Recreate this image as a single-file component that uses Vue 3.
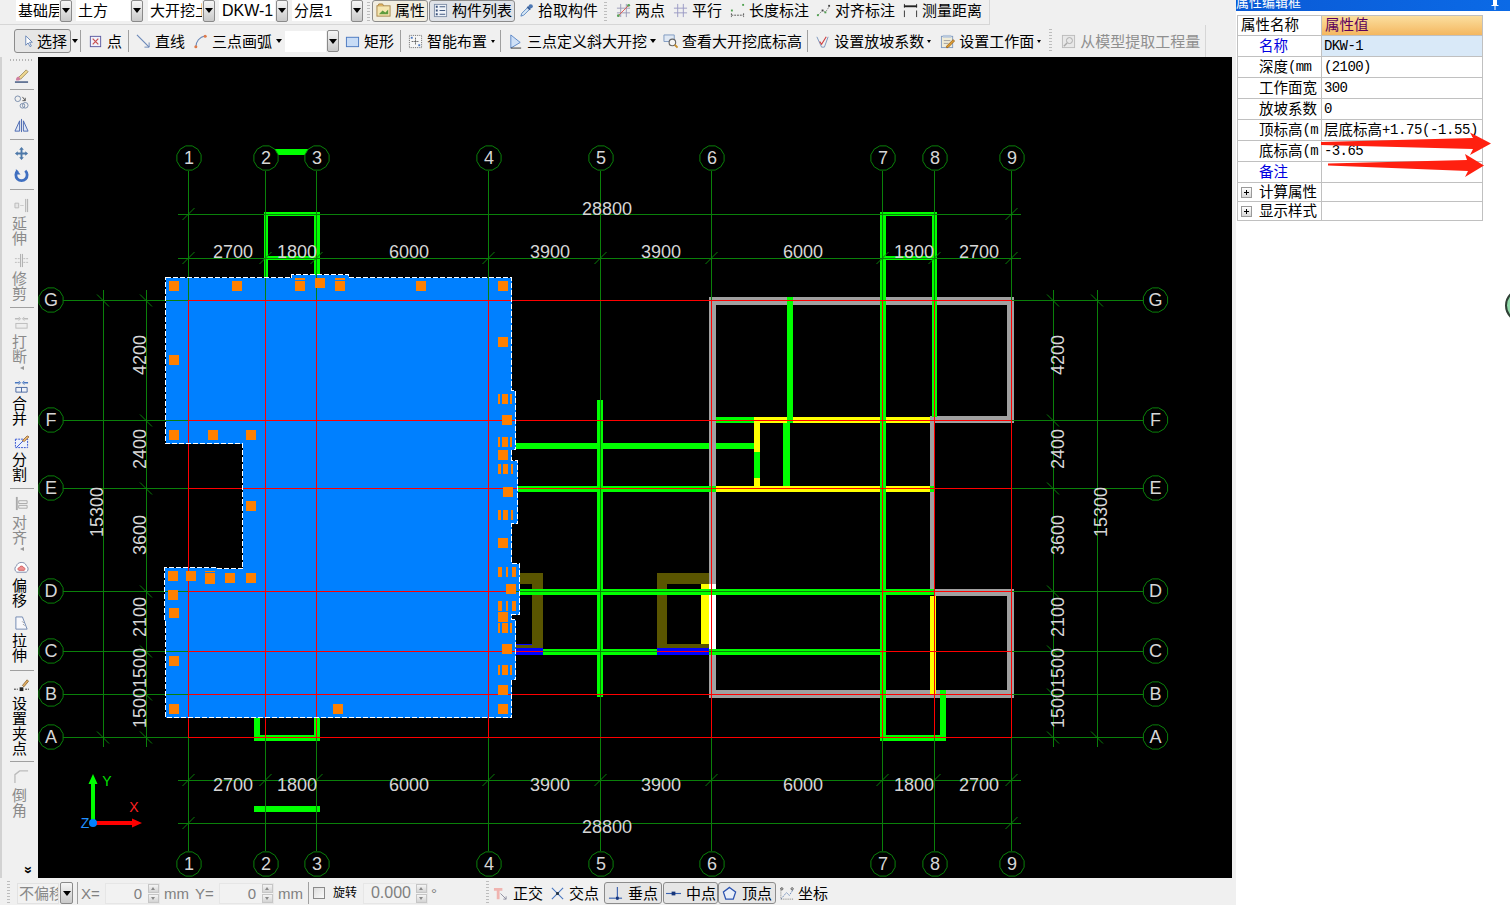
<script setup>
const ml = n => ({ marginLeft: n + 'px' })
const mt = n => ({ marginTop: n + 'px' })

const ic = {
  attr: '<rect x="1" y="3" width="14" height="11" fill="#f6e6b0" stroke="#a8864a"/><path d="M3 12l4-4 3 2 3-3v5z" fill="#5f9c3f"/><path d="M2 3l1-2h4l1 2" fill="#e8b860" stroke="#a8864a"/>',
  list: '<rect x="1.5" y="1.5" width="13" height="13" fill="#eef2f8" stroke="#8090a8"/><path d="M3 3h2v2H3zM3 7h2v2H3zM3 11h2v2H3z" fill="#39507a"/><path d="M7 4h6M7 8h6M7 12h6" stroke="#39507a"/>',
  pick: '<path d="M2 14l1-3 6-6 2 2-6 6z" fill="#d8e8f6" stroke="#5a86c0"/><path d="M9 4l3 3" stroke="#3a5f98" stroke-width="2"/><circle cx="12.5" cy="3.5" r="2.3" fill="#4d78b4"/>',
  two: '<path d="M5 1v14M11 1v14M1 5.5h14M1 10.5h14" stroke="#9a9ab8"/><path d="M2 14L14 2" stroke="#e05a50"/><circle cx="2.5" cy="13.5" r="1.5" fill="#5aa05a"/><circle cx="13.5" cy="2.5" r="1.5" fill="#5aa05a"/>',
  par: '<path d="M5 1v14M11 1v14M1 5.5h14M1 10.5h14" stroke="#9a9ac4"/>',
  len: '<path d="M1.5 11v4M14.5 11v4M1.5 13h13" stroke="#555" stroke-dasharray="2 1"/><rect x="1" y="7" width="2" height="2" fill="#4ea04e"/><rect x="13" y="1" width="2" height="2" fill="#4ea04e"/>',
  ali: '<path d="M2 13L7 8l3 2 4-6" fill="none" stroke="#888" stroke-dasharray="2 1"/><rect x="1" y="12" width="2" height="2" fill="#4ea04e"/><rect x="6" y="7" width="2" height="2" fill="#444"/><rect x="9" y="9" width="2" height="2" fill="#4ea04e"/><rect x="13" y="2" width="2" height="2" fill="#444"/>',
  mea: '<path d="M1.500 1v4M14.500 1v4M1.500 8v7M14.500 8v7" stroke="#333"/><path d="M1 3.500h14" stroke="#222" stroke-width="2"/>',
  sel: '<path d="M4 2v10l2.500-2.500 2 4 1.500-.7-2-4H11z" fill="#fff" stroke="#6a88b8"/>',
  pt: '<rect x="2.5" y="2.5" width="11" height="11" fill="#f2f2fa" stroke="#5a5aa0"/><path d="M5 5l6 6M11 5l-6 6" stroke="#c85050" stroke-width="1.3"/>',
  line: '<path d="M1 1l13 13" stroke="#6a88b8" stroke-width="1.2"/><path d="M14 14v-5M14 14H9" stroke="#6a88b8"/>',
  arc: '<path d="M3 14C3 8 7 3 13 2" fill="none" stroke="#6a88b8" stroke-width="1.2"/><circle cx="3" cy="13.5" r="1.6" fill="#e07a4a"/><circle cx="13" cy="2.5" r="1.6" fill="#e07a4a"/>',
  rect: '<rect x="1.5" y="3.5" width="13" height="10" fill="#c8dcf6" stroke="#4a78c0"/>',
  smart: '<rect x="1.5" y="1.5" width="13" height="13" fill="#f6f6f6" stroke="#666" stroke-dasharray="1 1"/><path d="M8 4v8M4 8h8" stroke="#222" stroke-dasharray="1 1"/><rect x="3" y="3" width="2" height="2" fill="#4a78c0"/><rect x="11" y="11" width="2" height="2" fill="#4a78c0"/>',
  slope: '<path d="M3 1v14l10-6z" fill="#cfe0f6" stroke="#5a86c8"/><path d="M3 15h11" stroke="#333"/>',
  view: '<path d="M1 1h11v7H1z" fill="#dfe8f4" stroke="#7f9ac0"/><circle cx="10" cy="9" r="3.5" fill="#f4f4f4" stroke="#666" stroke-width="1.2"/><path d="M12.5 11.5l3 3" stroke="#c89030" stroke-width="2"/>',
  coef: '<path d="M2 3l5 11h3l4-11" fill="none" stroke="#7a94bc"/><path d="M5 8l2 3 5-8" fill="none" stroke="#d04040" stroke-width="1.2"/>',
  work: '<rect x="1.5" y="2.5" width="12" height="12" fill="#f0ecd8" stroke="#7f9ac0"/><path d="M3 1h9v3H3z" fill="#b8c8dc"/><path d="M4 7h7M4 10h5" stroke="#a0a0a0"/><path d="M7 13l7-7 1.5 1.5-7 7H7z" fill="#e0a030" stroke="#a06820"/>',
  ext: '<rect x="1.5" y="1.5" width="13" height="13" fill="#e8e8e8" stroke="#bbb"/><circle cx="9" cy="7" r="3.2" fill="none" stroke="#aaa"/><path d="M6.5 9.5L3 13" stroke="#aaa" stroke-width="1.5"/>',
  brush: '<path d="M5 10l8-8 2 2-8 8z" fill="#f0d890" stroke="#a09060"/><path d="M2 13c0-3 2-4 3-4l2 3c-1 1-3 2-5 1z" fill="#d080a0"/><path d="M1 15h14" stroke="#39507a" stroke-width="1.5"/>',
  circles: '<circle cx="4" cy="4" r="3" fill="none" stroke="#7a8eac"/><circle cx="9" cy="11.5" r="2.5" fill="none" stroke="#7a8eac"/><circle cx="12" cy="11" r="3" fill="none" stroke="#7a8eac"/><path d="M9 2l3 4M12 6V3M12 6H9" fill="none" stroke="#555"/>',
  mirror: '<path d="M8 1v14" stroke="#4a68b0"/><path d="M6 3v11H1zM10 3v11h5z" fill="#dfe7f6" stroke="#4a68b0"/>',
  move: '<path d="M8 1l2.5 3h-5zM8 15l2.5-3h-5zM1 8l3-2.5v5zM15 8l-3-2.5v5zM7 4h2v8H7zM4 7h8v2H4z" fill="#4d78a8"/>',
  rotate: '<path d="M4 3a6 6 0 1 0 8 0" fill="none" stroke="#3f6fc0" stroke-width="3"/><path d="M2 1v6h5z" fill="#3f6fc0"/>',
  ext2: '<path d="M12.5 1v14M14.5 1v14" stroke="#aaa"/><path d="M1 8h4M7 8h1M9 8h1" stroke="#aaa"/><path d="M1 5.5h4v5H1z" fill="#e6e6e6" stroke="#bbb"/>',
  trim: '<path d="M7 1v14M9 1v14" stroke="#aaa"/><path d="M1 6h5M1 10h5M10 6h5M10 10h5" stroke="#bbb" stroke-dasharray="2 1"/>',
  brk: '<path d="M1 4h5M10 4h5" stroke="#bbb" stroke-width="1.5"/><path d="M5 2l2 2-2 2M11 2L9 4l2 2" fill="none" stroke="#bbb"/><rect x="2" y="9" width="12" height="5" fill="#eee" stroke="#bbb"/>',
  merge: '<path d="M1 4h5M10 4h5" stroke="#4a78c0" stroke-width="1.5"/><path d="M5 2l2 2-2 2M11 2L9 4l2 2" fill="none" stroke="#4a78c0"/><path d="M2 9h12v5H2zM8 9v5" fill="#eef2f8" stroke="#4a68a0"/>',
  split: '<rect x="1.5" y="5.5" width="13" height="9" fill="#eef2fb" stroke="#3050d0" stroke-dasharray="2 1"/><path d="M3 14L14 3" stroke="#3050d0"/><path d="M9 7l5-5 2 1-5 5z" fill="#e8b870" stroke="#a07040"/>',
  align: '<path d="M3 1v14" stroke="#aaa" stroke-width="2"/><path d="M5 5h9v3H5zM5 10h9v3H5z" fill="#eee" stroke="#aaa"/>',
  offset: '<path d="M3 13a4 4 0 0 1 0-7c0-4 9-5 10 0a4 4 0 0 1 0 7z" fill="#fff" stroke="#7a88a8"/><path d="M5 11c-2-2 0-3 1-3 0-2 4-2 4 0 2 0 2 2 1 3z" fill="#ee9090" stroke="#d06060"/>',
  stretch: '<path d="M2 1h7l5 13H2z" fill="#f8f8fb" stroke="#7088b0"/><path d="M9 6l1 1M10 9l1 1" stroke="#555"/>',
  grip: '<path d="M9 9l5-6 1.5 1.5-5 6z" fill="#e8b060" stroke="#907040"/><path d="M0 13h4M12 13h4" stroke="#222" stroke-dasharray="2 1"/><rect x="6" y="11" width="4" height="4" fill="#222"/>',
  chamfer: '<path d="M1 15V6l5-4h9" fill="none" stroke="#bbb" stroke-width="1.4"/>',
  ortho: '<path d="M1 2h9v3H7v9H4V5H1z" fill="#f0b4b0"/><path d="M8 8l6 6M11 14l3 0 0-3" stroke="#9090a0" fill="none"/>',
  cross: '<path d="M2 2l12 12M14 2L2 14" stroke="#4a78c0" stroke-width="1.2"/><rect x="6.5" y="6.5" width="3" height="3" fill="#234"/>',
  perp: '<path d="M1 13h14" stroke="#3a62b0" stroke-width="1.2"/><path d="M10 1v14" stroke="#3a62b0" stroke-width="1.2"/><rect x="8.5" y="11.5" width="3" height="3" fill="#17357a"/>',
  mid: '<path d="M0 8h16" stroke="#3a62b0" stroke-width="1.2"/><rect x="6" y="6" width="4" height="4" fill="#17357a"/>',
  vert: '<path d="M8 1.5l6.5 5-2.5 7.5H4L1.500 6.500z" fill="#e8eef8" stroke="#2a52b0" stroke-width="1.4"/>',
  coord: '<path d="M2 14L8 7l3 3 4-6" fill="none" stroke="#6a88b8" stroke-dasharray="2 1"/><path d="M2 2v12h13" fill="none" stroke="#777" stroke-dasharray="1 1"/><circle cx="3" cy="3" r="1.2" fill="none" stroke="#555"/><circle cx="14" cy="3" r="1.2" fill="none" stroke="#555"/>'
}

const row1Tools = [
  { ic: 'two', t: '两点', m: 9 },
  { ic: 'par', t: '平行', m: 8 },
  { ic: 'len', t: '长度标注', m: 8 },
  { ic: 'ali', t: '对齐标注', m: 7 },
  { ic: 'mea', t: '测量距离', m: 8 }
]

const row2 = [
  { k: 'sel', ic: 'sel', t: '选择', m: 0 },
  { k: 'tri', m: 1 },
  { k: 'sep', m: 2 },
  { k: 'tool', ic: 'pt', t: '点', m: 7 },
  { k: 'sep', m: 6 },
  { k: 'tool', ic: 'line', t: '直线', m: 7 },
  { k: 'tool', ic: 'arc', t: '三点画弧', m: 8 },
  { k: 'tri', m: 4 },
  { k: 'blank', m: 3 },
  { k: 'tool', ic: 'rect', t: '矩形', m: 6 },
  { k: 'sep', m: 6 },
  { k: 'tool', ic: 'smart', t: '智能布置', m: 7 },
  { k: 'tiny', m: 4 },
  { k: 'sep', m: 5 },
  { k: 'tool', ic: 'slope', t: '三点定义斜大开挖', m: 7 },
  { k: 'tri', m: 3 },
  { k: 'tool', ic: 'view', t: '查看大开挖底标高', m: 7 },
  { k: 'sep', m: 5 },
  { k: 'tool', ic: 'coef', t: '设置放坡系数', m: 7 },
  { k: 'tiny', m: 3 },
  { k: 'tool', ic: 'work', t: '设置工作面', m: 9 },
  { k: 'tiny', m: 3 },
  { k: 'grip', m: 8 },
  { k: 'off', ic: 'ext', t: '从模型提取工程量', m: 9 }
]

const side = [
  { ic: 'brush', g: 7 },
  { sep: 1, g: 6 },
  { ic: 'circles', g: 5 },
  { ic: 'mirror', g: 8 },
  { sep: 1, g: 6 },
  { ic: 'move', g: 6 },
  { ic: 'rotate', g: 7 },
  { sep: 1, g: 6 },
  { ic: 'ext2', g: 8, t: '延伸', tg: 3, dim: 1 },
  { ic: 'trim', g: 7, t: '修剪', tg: 3, dim: 1 },
  { sep: 1, g: 6 },
  { ic: 'brk', g: 7, t: '打断', tg: 4, dim: 1, tri: 1 },
  { ic: 'merge', g: 9, t: '合并', tg: 2 },
  { ic: 'split', g: 8, t: '分割', tg: 3 },
  { sep: 1, g: 6 },
  { ic: 'align', g: 7, t: '对齐', tg: 4, dim: 1, tri: 1 },
  { ic: 'offset', g: 9, t: '偏移', tg: 3 },
  { ic: 'stretch', g: 8, t: '拉伸', tg: 2 },
  { sep: 1, g: 7 },
  { ic: 'grip', g: 6, t: '设置夹点', tg: 4 },
  { sep: 1, g: 5 },
  { ic: 'chamfer', g: 7, t: '倒角', tg: 4, dim: 1 }
]

const xs = [188.5, 265.5, 316.5, 488.5, 600.5, 711.5, 882.5, 934.5, 1011.5]
const ys = [300.5, 420.5, 488.5, 591.5, 651.5, 694.5, 737.5]
const nums = ['1', '2', '3', '4', '5', '6', '7', '8', '9']
const letters = ['G', 'F', 'E', 'D', 'C', 'B', 'A']
const spans = ['2700', '1800', '6000', '3900', '3900', '6000', '1800', '2700']
const spanX = [233, 297, 409, 550, 661, 803, 914, 979]
const vSpans = [['4200', 355], ['2400', 449], ['3600', 535], ['2100', 617], ['1500', 668], ['1500', 708]]

const gon = (cx, cy) => {
  let s = ''
  for (let i = 0; i < 12; i++) {
    const a = Math.PI * 2 * (i + 0.5) / 12
    s += (cx + 12.5 * Math.cos(a)).toFixed(1) + ',' + (cy + 12.5 * Math.sin(a)).toFixed(1) + ' '
  }
  return s
}
const bubbles = [
  ...xs.flatMap((x, i) => [
    { id: 't' + i, x: x + 0.5, y: 158, l: nums[i] },
    { id: 'b' + i, x: x + 0.5, y: 864, l: nums[i] }
  ]),
  ...ys.flatMap((y, i) => [
    { id: 'l' + i, x: 51, y: y - 0.5, l: letters[i] },
    { id: 'r' + i, x: 1155.5, y: y - 0.5, l: letters[i] }
  ])
]

const G = '#00ff00', Y = '#ffff00', K = '#a0a0a0', O = '#5a5500', B = '#0000ff', W = '#ffffff'
const walls = [
  [709, 297, 305, 8, K], [709, 297, 7, 287, K], [1007, 297, 7, 126, K], [930, 416, 84, 7, K], [930, 416, 4, 173, K],
  [934, 589, 80, 7, K], [1007, 589, 7, 109, K], [709, 690, 305, 8, K], [709, 655, 7, 43, K],
  [520, 573, 23, 11, O], [532, 573, 11, 75, O], [516, 644, 27, 4, O], [657, 573, 52, 11, O], [657, 573, 10, 75, O], [657, 644, 52, 4, O],
  [754, 417, 176, 6, Y], [754, 423, 6, 63, Y], [716, 486, 214, 6, Y], [701, 584, 8, 60, Y], [930, 596, 6, 98, Y],
  [709, 584, 7, 65, W],
  [264, 212, 4, 65, G], [314, 212, 6, 65, G], [264, 212, 56, 4, G], [264, 256, 56, 4, G], [270, 149, 50, 6, G],
  [880, 212, 6, 529, G], [932, 212, 5, 205, G], [880, 212, 57, 4, G], [880, 256, 57, 4, G],
  [787, 297, 6, 126, G], [783, 423, 7, 63, G], [716, 417, 38, 6, G], [516, 443, 193, 6, G], [716, 443, 38, 6, G],
  [754, 452, 6, 26, G], [516, 486, 200, 6, G], [930, 486, 4, 6, G], [597, 400, 6, 297, G],
  [519, 589, 415, 6, G], [543, 649, 114, 6, G], [709, 649, 171, 6, G],
  [516, 648, 27, 7, B], [657, 648, 52, 7, B], [516, 644, 16, 1, B],
  [254, 717, 6, 24, G], [314, 717, 6, 24, G], [254, 735, 66, 6, G], [254, 806, 66, 6, G],
  [880, 735, 66, 6, G], [940, 690, 6, 51, G]
]

const poly = '165.5,277.5 291.500,277.500 291.500,274.500 348.500,274.500 348.500,277.500 511.500,277.500 511.500,390.500 515.500,390.500 515.500,449.500 511.500,449.500 511.500,460.500 517.500,460.500 517.500,523.500 511.500,523.500 511.500,563.500 519.500,563.500 519.500,614.500 511.500,614.500 511.500,619.500 515.500,619.500 515.500,679.500 511.500,679.500 511.500,717.500 165.500,717.500 165.500,621.500 164.500,621.500 164.500,567.500 216.500,567.500 216.500,568.500 242.500,568.500 242.500,443.500 165.500,443.500'

const sq = [
  [169, 281], [232, 281], [295, 281], [315, 278], [335, 281], [416, 281], [498, 281], [498, 337], [169, 355], [169, 430], [208, 430],
  [246, 430], [502, 415], [498, 450], [503, 487], [246, 501], [498, 538], [506, 584], [498, 612], [502, 644], [498, 685], [498, 704],
  [333, 704], [169, 704], [169, 656], [169, 608], [168, 590], [168, 571], [186, 571], [205, 573], [225, 573], [246, 573]
]
const stripes = [
  [295, 278, 10, 2], [295, 290, 10, 1], [335, 278, 10, 2], [335, 290, 10, 1], [205, 571, 10, 1], [205, 583, 10, 1],
  ...[394, 437, 623, 665].flatMap(y => [[498, y, 2, 10], [502, y, 6, 10], [510, y, 2, 10]]),
  ...[464, 510].flatMap(y => [[498, y, 3, 10], [503, y, 5, 10], [511, y, 2, 10]]),
  ...[567, 601].flatMap(y => [[498, y, 4, 10], [506, y, 2, 10], [512, y, 4, 10]])
]

const reds = [
  ...[300.5, 420.5, 488.5, 694.5, 737.5].map(y => [188, y, 1012, y]),
  [188, 591.5, 516, 591.5], [883, 591.5, 1012, 591.5],
  [188, 651.5, 543, 651.5], [657, 651.5, 709, 651.5], [880, 651.5, 1012, 651.5],
  ...xs.filter(x => x !== 600.5).map(x => [x, 300, x, 738])
]

const ticks = [
  ...xs.flatMap(x => [[x - 6, 264, x + 6, 252], [x - 6, 786, x + 6, 774]]),
  ...[188.5, 1011.5].flatMap(x => [[x - 6, 220, x + 6, 208], [x - 6, 829, x + 6, 817]]),
  ...ys.flatMap(y => [[140, y - 6, 152, y + 6], [1047, y - 6, 1059, y + 6]]),
  ...[300.5, 737.5].flatMap(y => [[97, y - 6, 109, y + 6], [1091, y - 6, 1103, y + 6]])
]
const dimLines = [
  [178, 214.5, 1021, 214.5], [178, 258.5, 1021, 258.5], [178, 780.5, 1021, 780.5], [178, 823.5, 1021, 823.5],
  [103.5, 290, 103.5, 747], [146.5, 290, 146.5, 747], [1053.5, 290, 1053.5, 747], [1097.5, 290, 1097.5, 747]
]
</script>

<template>
  <div class="app">
    <div class="main">
      <div class="bar row1">
        <div class="combo"><span class="field f1">基础层</span><span class="drop"><i class="tri big"></i></span></div>
        <div class="combo gap4"><span class="field f2">土方</span><span class="drop"><i class="tri big"></i></span></div>
        <div class="combo gap5"><span class="field f2">大开挖土方</span><span class="drop"><i class="tri big"></i></span></div>
        <div class="combo gap4"><span class="field f3">DKW-1</span><span class="drop"><i class="tri big"></i></span></div>
        <div class="combo gap4"><span class="field f4">分层1</span><span class="drop"><i class="tri big"></i></span></div>
        <span class="sep dotted" :style="ml(4)"></span>
        <div class="btn warm" :style="ml(2)"><svg class="ic" viewBox="0 0 16 16" v-html="ic.attr"></svg><span>属性</span></div>
        <div class="btn cool" :style="ml(1)"><svg class="ic" viewBox="0 0 16 16" v-html="ic.list"></svg><span>构件列表</span></div>
        <div class="tool" :style="ml(4)"><svg class="ic" viewBox="0 0 16 16" v-html="ic.pick"></svg><span>拾取构件</span></div>
        <span class="sep dotted" :style="ml(6)"></span>
        <div v-for="t in row1Tools" :key="t.t" class="tool" :style="ml(t.m)"><svg class="ic" viewBox="0 0 16 16" v-html="ic[t.ic]"></svg><span>{{ t.t }}</span></div>
      </div>
      <div class="bar row2">
        <template v-for="(t, i) in row2" :key="i">
          <div v-if="t.k === 'sel'" class="btn selb" :style="ml(t.m)"><svg class="ic" viewBox="0 0 16 16" v-html="ic[t.ic]"></svg><span>{{ t.t }}</span></div>
          <i v-else-if="t.k === 'tri'" class="tri" :style="ml(t.m)"></i>
          <i v-else-if="t.k === 'tiny'" class="tri tiny" :style="ml(t.m)"></i>
          <span v-else-if="t.k === 'sep'" class="sep" :style="ml(t.m)"></span>
          <span v-else-if="t.k === 'grip'" class="sep dotted" :style="ml(t.m)"></span>
          <div v-else-if="t.k === 'blank'" class="combo" :style="ml(t.m)"><span class="field f5"></span><span class="drop"><i class="tri big"></i></span></div>
          <div v-else class="tool" :class="{ off: t.k === 'off' }" :style="ml(t.m)"><svg class="ic" viewBox="0 0 16 16" v-html="ic[t.ic]"></svg><span>{{ t.t }}</span></div>
        </template>
      </div>

      <div class="mid">
        <div class="side">
          <span class="side-grip"></span>
          <template v-for="(s, i) in side" :key="i">
            <span v-if="s.sep" class="side-sep" :style="mt(s.g)"></span>
            <template v-else>
              <svg class="ic" viewBox="0 0 16 16" :style="mt(s.g)" v-html="ic[s.ic]"></svg>
              <span v-if="s.t" class="vtext" :class="{ dim: s.dim }" :style="mt(s.tg)">{{ s.t }}</span>
              <i v-if="s.tri" class="tri-left"></i>
            </template>
          </template>
          <span class="chev">»</span>
        </div>
        <svg class="cad" viewBox="38 57 1194 821" width="1194" height="821">
          <rect x="38" y="57" width="1194" height="821" fill="#000" />
          <g shape-rendering="crispEdges">
            <rect v-for="(w, i) in walls" :key="i" :x="w[0]" :y="w[1]" :width="w[2]" :height="w[3]" :fill="w[4]" />
          </g>
          <polygon :points="poly" fill="#0080ff" shape-rendering="crispEdges" />
          <g stroke="#0a800a" stroke-width="1" shape-rendering="crispEdges">
            <line v-for="x in xs" :key="x" :x1="x" y1="171" :x2="x" y2="851" />
            <line v-for="y in ys" :key="y" x1="63" :y1="y" x2="1143" :y2="y" />
            <line v-for="(d, i) in dimLines" :key="i" :x1="d[0]" :y1="d[1]" :x2="d[2]" :y2="d[3]" />
          </g>
          <g stroke="#0a800a" stroke-width="1">
            <line v-for="(d, i) in ticks" :key="i" :x1="d[0]" :y1="d[1]" :x2="d[2]" :y2="d[3]" />
          </g>
          <g stroke="#ff0000" stroke-width="1" shape-rendering="crispEdges">
            <line v-for="(d, i) in reds" :key="i" :x1="d[0]" :y1="d[1]" :x2="d[2]" :y2="d[3]" />
          </g>
          <g fill="#ff8000" shape-rendering="crispEdges">
            <rect v-for="(s, i) in sq" :key="i" :x="s[0]" :y="s[1]" width="10" height="10" />
            <rect v-for="(s, i) in stripes" :key="i" :x="s[0]" :y="s[1]" :width="s[2]" :height="s[3]" />
          </g>
          <polygon :points="poly" fill="none" stroke="#fff" stroke-width="1" stroke-dasharray="5 2" shape-rendering="crispEdges" />
          <g v-for="b in bubbles" :key="b.id">
            <polygon :points="gon(b.x, b.y)" fill="#000" stroke="#0a800a" stroke-width="1" />
            <text class="dim-t" :x="b.x" :y="b.y">{{ b.l }}</text>
          </g>
          <text class="dim-t" x="607" y="209">28800</text>
          <text class="dim-t" x="607" y="827">28800</text>
          <template v-for="(s, i) in spans" :key="i">
            <text class="dim-t" :x="spanX[i]" y="252">{{ s }}</text>
            <text class="dim-t" :x="spanX[i]" y="785">{{ s }}</text>
          </template>
          <template v-for="(v, i) in vSpans" :key="i">
            <text class="dim-t" :transform="`translate(140 ${v[1]}) rotate(-90)`">{{ v[0] }}</text>
            <text class="dim-t" :transform="`translate(1058 ${v[1]}) rotate(-90)`">{{ v[0] }}</text>
          </template>
          <text class="dim-t" transform="translate(97 512) rotate(-90)">15300</text>
          <text class="dim-t" transform="translate(1101 512) rotate(-90)">15300</text>
          <path d="M91 823V784h-2.500L93 774l4.500 10H95v39z" fill="#00ff00" />
          <path d="M93 821h39v-2.500l10 4.500-10 4.500V825H93z" fill="#ff0000" />
          <circle cx="93" cy="823" r="4" fill="#0080ff" />
          <text class="axis" x="107" y="781" fill="#00e000">Y</text>
          <text class="axis" x="134" y="807" fill="#ff2020">X</text>
          <text class="axis" x="85" y="823" fill="#2090ff">Z</text>
        </svg>
        <div class="gutter"></div>
      </div>

      <div class="bottom">
        <span class="sep dotted bgrip"></span>
        <div class="combo fade" :style="ml(7)"><span class="field f6">不偏移</span><span class="drop tall"><i class="tri big"></i></span></div>
        <span class="sep" :style="ml(4)"></span>
        <span class="glbl w19" :style="ml(3)">X=</span>
        <div class="spin w55" :style="ml(5)"><span class="val">0</span><span class="spb"><i></i><i></i></span></div>
        <span class="glbl w25" :style="ml(4)">mm</span>
        <span class="glbl w19" :style="ml(6)">Y=</span>
        <div class="spin w55" :style="ml(5)"><span class="val">0</span><span class="spb"><i></i><i></i></span></div>
        <span class="glbl w25" :style="ml(4)">mm</span>
        <span class="sep" :style="ml(5)"></span>
        <span class="chk" :style="ml(4)"></span>
        <span class="rot" :style="ml(8)">旋转</span>
        <div class="spin w65" :style="ml(6)"><span class="val wide">0.000</span><span class="spb"><i></i><i></i></span></div>
        <span class="glbl w5" :style="ml(3)">°</span>
        <span class="sep dotted" :style="ml(50)"></span>
        <div class="tool g5" :style="ml(4)"><svg class="ic" viewBox="0 0 16 16" v-html="ic.ortho"></svg><span>正交</span></div>
        <div class="tool" :style="ml(7)"><svg class="ic" viewBox="0 0 16 16" v-html="ic.cross"></svg><span>交点</span></div>
        <div class="btn g5" :style="ml(5)"><svg class="ic" viewBox="0 0 16 16" v-html="ic.perp"></svg><span>垂点</span></div>
        <div class="btn g5 pl2" :style="ml(1)"><svg class="ic" viewBox="0 0 16 16" v-html="ic.mid"></svg><span>中点</span></div>
        <div class="btn g5" :style="ml(0)"><svg class="ic" viewBox="0 0 16 16" v-html="ic.vert"></svg><span>顶点</span></div>
        <div class="tool" :style="ml(3)"><svg class="ic" viewBox="0 0 16 16" v-html="ic.coord"></svg><span>坐标</span></div>
      </div>
    </div>

    <aside class="panel">
      <div class="title"><span class="title-t">属性编辑框</span>
        <svg class="pin" viewBox="0 0 10 10" width="10" height="10"><path d="M3 0h4v5h1.500v1h-3v4h-1V6h-3V5H3z" fill="#fff" /></svg>
      </div>
      <div class="grid">
        <div class="gr head"><div class="c1"><span class="cj">属性名称</span></div><div class="c2 hv"><span class="cj">属性值</span></div></div>
        <div class="gr"><div class="c1 ind link"><span class="cj">名称</span></div><div class="c2 picked">DKW-1</div></div>
        <div class="gr"><div class="c1 ind"><span class="cj">深度</span>(mm</div><div class="c2">(2100)</div></div>
        <div class="gr"><div class="c1 ind"><span class="cj">工作面宽</span></div><div class="c2">300</div></div>
        <div class="gr"><div class="c1 ind"><span class="cj">放坡系数</span></div><div class="c2">0</div></div>
        <div class="gr"><div class="c1 ind"><span class="cj">顶标高</span>(m</div><div class="c2"><span class="cj">层底标高</span><span class="loose">+1.75(-1.55)</span></div></div>
        <div class="gr"><div class="c1 ind"><span class="cj">底标高</span>(m</div><div class="c2">-3.65</div></div>
        <div class="gr"><div class="c1 ind link"><span class="cj">备注</span></div><div class="c2"></div></div>
        <div class="gr short"><div class="c1 grp"><span class="plus"></span><span class="cj">计算属性</span></div><div class="c2"></div></div>
        <div class="gr short"><div class="c1 grp"><span class="plus"></span><span class="cj">显示样式</span></div><div class="c2"></div></div>
      </div>
      <svg class="arrows" viewBox="0 0 280 200" width="280" height="200">
        <polygon points="85,142 237,138 234,132.500 255,143.500 234,155 237,149 85,145" fill="#ff2010" />
        <polygon points="92,163.500 231,160 229,154 248,165.500 229,177 232,171 92,165.500" fill="#ff2010" />
      </svg>
      <span class="ball"></span>
    </aside>
  </div>
</template>

<style>
html, body { margin: 0; padding: 0; background: #f0f0f0; overflow: hidden; }
</style>

<style scoped>
.app {
  width: 1510px; height: 905px; display: flex; overflow: hidden; background: #f0f0f0; color: #000;
  font-family: "Liberation Sans", "Noto Sans CJK SC", sans-serif; font-size: 15px; line-height: 1;
}
.main { width: 1236px; flex: none; display: flex; flex-direction: column; }
.ic { width: 15px; height: 15px; flex: none; display: block; }
.bar { display: flex; align-items: center; flex: none; background: #f0f0f0; box-sizing: border-box; }
.row1 { width: 990px; height: 25px; padding: 0 0 3px 16px; border-right: 1px solid #d6d6d6; border-bottom: 1px solid #d6d6d6; }
.row2 { width: 1206px; height: 32px; padding-left: 14px; border-right: 1px solid #d6d6d6; }
.combo { display: flex; align-items: center; gap: 1px; flex: none; height: 21px; }
.gap4 { margin-left: 4px; }
.gap5 { margin-left: 5px; }
.field {
  display: block; height: 21px; line-height: 21px; background: #fff; padding-left: 2px; box-sizing: border-box;
  overflow: hidden; white-space: nowrap; font-size: 15px;
}
.f1 { width: 43px; }
.f2 { width: 54px; }
.f3 { width: 56px; font-size: 16px; padding-left: 3px; }
.f4 { width: 58px; }
.f5 { width: 41px; }
.f6 { width: 42px; color: #888; background: #f2f2f2; border: 1px solid #e2e2e2; line-height: 19px; padding-left: 1px; }
.drop {
  width: 12px; height: 22px; box-sizing: border-box; display: flex; align-items: center; justify-content: center;
  background: linear-gradient(#f6f6f6, #c9c9c9); border: 1px solid #8a8a8a; border-radius: 2px;
}
.drop.tall { width: 13px; }
.tri { display: block; flex: none; width: 0; height: 0; border-left: 3.500px solid transparent; border-right: 3.500px solid transparent; border-top: 4px solid #000; }
.tri.big { border-left-width: 4px; border-right-width: 4px; border-top-width: 5px; }
.tri.tiny { border-left-width: 2.500px; border-right-width: 2.500px; border-top-width: 3px; }
.sep { display: block; flex: none; width: 1px; height: 22px; background: #a0a0a0; }
.sep.dotted { width: 3px; height: 24px; background: repeating-linear-gradient(#bdbdbd 0 1px, transparent 1px 3px); }
.tool { display: flex; align-items: center; gap: 4px; flex: none; white-space: nowrap; }
.tool.off { color: #8f8f8f; }
.btn {
  display: flex; align-items: center; gap: 4px; flex: none; box-sizing: border-box; height: 22px; padding: 0 2px 0 3px;
  border: 1px solid #8c8c8c; border-radius: 3px; background: #e6e6e6; white-space: nowrap;
}
.warm { background: #f1ede0; }
.cool { background: #dfe2e7; }
.selb { height: 24px; gap: 0; padding: 0 3px 0 7px; }
.g5 { gap: 5px; }
.btn.g5 { height: 22px; padding: 0 3px 0 3px; }
.btn.pl2 { padding: 0 1px 0 2px; }
.mid { display: flex; height: 821px; flex: none; }
.side {
  width: 38px; box-sizing: border-box; flex: none; display: flex; flex-direction: column; align-items: center;
  border-left: 2px solid #d2d2d2; padding-left: 3px;
}
.side-grip { display: block; width: 24px; height: 2px; margin-top: 2px; background: repeating-linear-gradient(90deg, #b5b5b5 0 1px, transparent 1px 3px); flex: none; }
.side-sep { display: block; width: 24px; height: 1px; background: #a0a0a0; flex: none; }
.vtext { display: block; width: 15px; font-size: 15px; line-height: 15px; margin-right: 4px; word-break: break-all; flex: none; }
.vtext.dim { color: #8a8a8a; }
.tri-left { display: block; margin-top: 2px; width: 0; height: 0; border-top: 2.500px solid transparent; border-bottom: 2.500px solid transparent; border-right: 4px solid #999; flex: none; }
.chev { margin-top: auto; margin-bottom: 2px; margin-left: 14px; transform: rotate(90deg); font-size: 14px; font-weight: bold; line-height: 12px; }
.cad { display: block; flex: none; }
.gutter { width: 4px; flex: none; background: #f0f0f0; }
.dim-t { font-family: "Liberation Sans", sans-serif; font-size: 18px; fill: #d6d6d6; text-anchor: middle; dominant-baseline: central; }
.axis { font-family: "Liberation Sans", sans-serif; font-size: 14px; text-anchor: middle; dominant-baseline: central; }
.bottom { display: flex; align-items: center; height: 27px; flex: none; padding: 3px 0 0 7px; box-sizing: border-box; background: #f0f0f0; }
.bgrip { height: 22px; }
.glbl { display: block; flex: none; color: #808080; font-size: 15px; white-space: nowrap; }
.w19 { width: 19px; }
.w25 { width: 25px; }
.w5 { width: 5px; }
.spin { display: flex; flex: none; align-items: center; height: 21px; box-sizing: border-box; background: #f2f2f2; border: 1px solid #e6e6e6; }
.w55 { width: 55px; }
.w65 { width: 65px; }
.val { flex: 1; text-align: right; color: #808080; font-size: 15px; padding-right: 6px; }
.val.wide { font-size: 16px; padding-right: 5px; }
.spb { width: 11px; display: flex; flex-direction: column; gap: 1px; flex: none; }
.spb i { display: block; height: 9px; background: linear-gradient(#f4f4f4, #d4d4d4); border: 1px solid #c6c6c6; box-sizing: border-box; position: relative; }
.spb i::after { content: ""; position: absolute; left: 1.500px; top: 2px; width: 0; height: 0; border-left: 2.500px solid transparent; border-right: 2.500px solid transparent; border-bottom: 3px solid #8a8a8a; }
.spb i:last-child::after { border-bottom: 0; border-top: 3px solid #8a8a8a; }
.chk { display: block; width: 12px; height: 12px; flex: none; box-sizing: border-box; border: 1px solid #8a8a8a; background: linear-gradient(135deg, #ddd, #fafafa); }
.rot { font-size: 12px; flex: none; width: 24px; white-space: nowrap; }
.panel { position: relative; width: 274px; flex: none; background: #fff; }
.title { height: 11px; background: linear-gradient(90deg, #0a5ad6, #0b6ae6); color: #fff; overflow: hidden; position: relative; }
.title-t { display: block; font-size: 13px; line-height: 6px; white-space: nowrap; }
.pin { position: absolute; left: 254px; top: 0; }
.grid { margin: 4px 0 0 1px; width: 246px; border-top: 1px solid #c0c0c0; border-left: 1px solid #c0c0c0; border-right: 1px solid #c0c0c0; box-sizing: border-box; font-family: "Liberation Mono", "Noto Sans CJK SC", monospace; font-size: 14px; letter-spacing: -0.6px; }
.gr { display: grid; grid-template-columns: 83px 1fr; height: 21px; box-sizing: border-box; border-bottom: 1px solid #c0c0c0; }
.gr.head { height: 20px; }
.gr.short { height: 19px; }
.c1, .c2 { display: flex; align-items: center; overflow: hidden; white-space: nowrap; min-width: 0; }
.c1 { padding-left: 3px; border-right: 1px solid #c0c0c0; box-sizing: border-box; width: 84px; }
.c2 { padding-left: 2px; margin-left: 1px; }
.cj { font-family: "Noto Sans CJK SC", sans-serif; font-size: 14.500px; flex: none; letter-spacing: 0; position: relative; top: -1px; }
.loose { letter-spacing: -0.4px; }
.ind { padding-left: 21px; }
.link { color: #0000e0; }
.hv { background: linear-gradient(#fbdf9f, #f4b760); color: #5c005c; padding-left: 3px; margin-left: 1px; }
.picked { background: #d9e9f8; }
.grp { padding-left: 3px; gap: 7px; }
.plus {
  display: block; position: relative; flex: none; width: 11px; height: 11px; box-sizing: border-box;
  border: 1px solid #9a9a9a; background: linear-gradient(#fff, #d8d8d8);
}
.plus::before, .plus::after { content: ""; position: absolute; background: #000; }
.plus::before { left: 2px; top: 4px; width: 5px; height: 1px; }
.plus::after { left: 4px; top: 2px; width: 1px; height: 5px; }
.arrows { position: absolute; left: 0; top: 0; pointer-events: none; }
.ball { position: absolute; left: 269px; top: 289px; width: 32px; height: 33px; border-radius: 50%; box-sizing: border-box; border: 2px solid #2f3f35; background: #8fd8a8; }
</style>
